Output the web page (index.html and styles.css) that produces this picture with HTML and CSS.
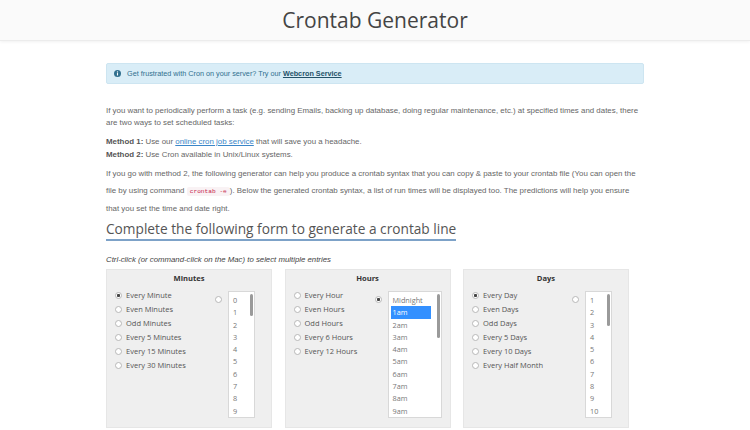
FILE: index.html
```html
<!DOCTYPE html>
<html lang="en">
<head>
<meta charset="utf-8">
<title>Crontab Generator</title>
<link rel="stylesheet" href="styles.css">
</head>
<body>
<header class="site-header">
  <h1 class="site-title">Crontab Generator</h1>
</header>
<main class="container">
  <div class="alert">
    <svg class="alert-icon" width="7" height="7" viewBox="0 0 14 14" aria-hidden="true">
      <circle cx="7" cy="7" r="7" fill="#31708f"/>
      <circle cx="7" cy="3.8" r="1.3" fill="#fff"/>
      <rect x="5.9" y="5.9" width="2.2" height="5.3" rx="0.6" fill="#fff"/>
    </svg>
    <span>Get frustrated with Cron on your server? Try our <a class="alert-link" href="#">Webcron Service</a></span>
  </div>

  <p class="para p1">If you want to periodically perform a task (e.g. sending Emails, backing up database, doing regular maintenance, etc.) at specified times and dates, there<br>are two ways to set scheduled tasks:</p>

  <p class="para p2"><b>Method 1:</b> Use our <a class="link" href="#">online cron job service</a> that will save you a headache.<br><b>Method 2:</b> Use Cron available in Unix/Linux systems.</p>

  <p class="para p3">If you go with method 2, the following generator can help you produce a crontab syntax that you can copy &amp; paste to your crontab file (You can open the<br>file by using command <code class="code">crontab -e</code>). Below the generated crontab syntax, a list of run times will be displayed too. The predictions will help you ensure<br>that you set the time and date right.</p>

  <h2 class="form-title">Complete the following form to generate a crontab line</h2>

  <p class="hint">Ctrl-click (or command-click on the Mac) to select multiple entries</p>

  <div class="panels">
    <section class="panel">
      <h3 class="panel-title">Minutes</h3>
      <div class="panel-body">
        <ul class="opts">
          <li class="opt"><span class="radio on"></span>Every Minute</li>
          <li class="opt"><span class="radio"></span>Even Minutes</li>
          <li class="opt"><span class="radio"></span>Odd Minutes</li>
          <li class="opt"><span class="radio"></span>Every 5 Minutes</li>
          <li class="opt"><span class="radio"></span>Every 15 Minutes</li>
          <li class="opt"><span class="radio"></span>Every 30 Minutes</li>
        </ul>
        <div class="pick">
          <span class="radio"></span>
          <div class="listbox narrow">
            <ul class="items">
              <li>0</li><li>1</li><li>2</li><li>3</li><li>4</li><li>5</li><li>6</li><li>7</li><li>8</li><li>9</li>
            </ul>
            <span class="thumb thumb-min"></span>
          </div>
        </div>
      </div>
    </section>

    <section class="panel">
      <h3 class="panel-title">Hours</h3>
      <div class="panel-body body-hours">
        <ul class="opts">
          <li class="opt"><span class="radio"></span>Every Hour</li>
          <li class="opt"><span class="radio"></span>Even Hours</li>
          <li class="opt"><span class="radio"></span>Odd Hours</li>
          <li class="opt"><span class="radio"></span>Every 6 Hours</li>
          <li class="opt"><span class="radio"></span>Every 12 Hours</li>
        </ul>
        <div class="pick">
          <span class="radio on"></span>
          <div class="listbox wide">
            <ul class="items">
              <li>Midnight</li><li class="sel">1am</li><li>2am</li><li>3am</li><li>4am</li><li>5am</li><li>6am</li><li>7am</li><li>8am</li><li>9am</li>
            </ul>
            <span class="thumb thumb-hour"></span>
          </div>
        </div>
      </div>
    </section>

    <section class="panel">
      <h3 class="panel-title">Days</h3>
      <div class="panel-body">
        <ul class="opts">
          <li class="opt"><span class="radio on"></span>Every Day</li>
          <li class="opt"><span class="radio"></span>Even Days</li>
          <li class="opt"><span class="radio"></span>Odd Days</li>
          <li class="opt"><span class="radio"></span>Every 5 Days</li>
          <li class="opt"><span class="radio"></span>Every 10 Days</li>
          <li class="opt"><span class="radio"></span>Every Half Month</li>
        </ul>
        <div class="pick">
          <span class="radio"></span>
          <div class="listbox narrow">
            <ul class="items">
              <li>1</li><li>2</li><li>3</li><li>4</li><li>5</li><li>6</li><li>7</li><li>8</li><li>9</li><li>10</li>
            </ul>
            <span class="thumb thumb-day"></span>
          </div>
        </div>
      </div>
    </section>
  </div>
</main>
</body>
</html>
```
FILE: styles.css
```css
html, body {
  margin: 0;
  padding: 0;
  background: #fff;
}
body {
  font-family: "Liberation Sans", Arial, sans-serif;
  color: #666;
  overflow: hidden;
}

.site-header {
  height: 40px;
  background: #fafafa;
  border-bottom: 1px solid #ececec;
  box-shadow: 0 1px 3px rgba(0, 0, 0, 0.06);
  display: flex;
  align-items: center;
  justify-content: center;
}
.site-title {
  margin: 0;
  font: 400 21px/1 "Open Sans", sans-serif;
  color: #444;
}

.container {
  width: 538px;
  margin: 0 auto;
}

.alert {
  margin-top: 22px;
  height: 21px;
  box-sizing: border-box;
  border: 1px solid #cde5f1;
  background: #d9edf7;
  border-radius: 2px;
  display: flex;
  align-items: center;
  gap: 6px;
  padding-left: 7px;
  font-size: 7.25px;
  color: #31708f;
}
.alert-icon {
  flex: none;
  display: block;
}
.alert-link {
  color: #245269;
  font-weight: bold;
  text-decoration: underline;
}

.para {
  margin: 0;
  font-size: 7.9px;
  white-space: nowrap;
}
.p1 {
  margin-top: 21px;
  line-height: 12px;
}
.p2 {
  margin-top: 5.5px;
  line-height: 13px;
}
.p2 b {
  color: #555;
}
.p3 {
  margin-top: 4px;
  line-height: 17px;
}
.link {
  color: #3a86c8;
  text-decoration: underline;
}
.code {
  font-family: "Liberation Mono", monospace;
  font-size: 6.2px;
  color: #c7254e;
  background: #f9f2f4;
  padding: 1px 3px;
  border-radius: 2px;
}

.form-title {
  display: inline-block;
  margin: 2.5px 0 0;
  font: 400 13.7px/20px "Open Sans", sans-serif;
  color: #555;
  border-bottom: 2px solid #7da2c8;
}

.hint {
  margin: 14px 0 0;
  font-size: 7.8px;
  line-height: 10px;
  font-style: italic;
  color: #444;
}

.panels {
  margin-top: 4px;
  display: grid;
  grid-template-columns: repeat(3, 166px);
  column-gap: 12.5px;
}
.panel {
  height: 159px;
  box-sizing: border-box;
  background: #efefef;
  border: 1px solid #e6e6e6;
}
.panel-title {
  margin: 0;
  padding-top: 3px;
  font: 700 7.6px/10px "Open Sans", sans-serif;
  color: #333;
  text-align: center;
}
.panel-body {
  display: flex;
  margin-top: 5px;
  padding: 0 16px 0 8px;
}
.body-hours {
  padding-right: 8px;
}

.opts {
  flex: 1;
  list-style: none;
  margin: 0;
  padding: 0;
  font: 400 7.5px/14px "Open Sans", sans-serif;
  color: #555;
}
.opt {
  display: flex;
  align-items: center;
  gap: 4px;
  white-space: nowrap;
}
.radio {
  flex: none;
  width: 7px;
  height: 7px;
  box-sizing: border-box;
  border-radius: 50%;
  border: 1px solid #b8b8b8;
  background: #fff;
}
.radio.on {
  background: radial-gradient(circle, #444 0, #444 1.3px, #fff 1.9px);
}

.pick {
  display: flex;
  align-items: flex-start;
  gap: 6px;
}
.pick > .radio {
  margin-top: 8px;
}
.listbox {
  position: relative;
  margin-top: 3px;
  height: 127px;
  box-sizing: border-box;
  border: 1px solid #d8d8d8;
  background: #fff;
  padding: 2px;
  overflow: hidden;
}
.listbox.narrow {
  width: 27px;
}
.listbox.wide {
  width: 54px;
}
.items {
  list-style: none;
  margin: 0 8px 0 0;
  padding: 0;
  font: 400 7.3px/12.3px "Open Sans", sans-serif;
  color: #777;
}
.items li {
  padding-left: 2px;
  white-space: nowrap;
}
.items .sel {
  background: #3390ff;
  color: #fff;
}
.thumb {
  position: absolute;
  top: 2px;
  right: 1px;
  width: 3px;
  border-radius: 2px;
  background: #9a9a9a;
}
.thumb-min {
  height: 22px;
}
.thumb-hour {
  height: 44px;
}
.thumb-day {
  height: 32px;
}
```
